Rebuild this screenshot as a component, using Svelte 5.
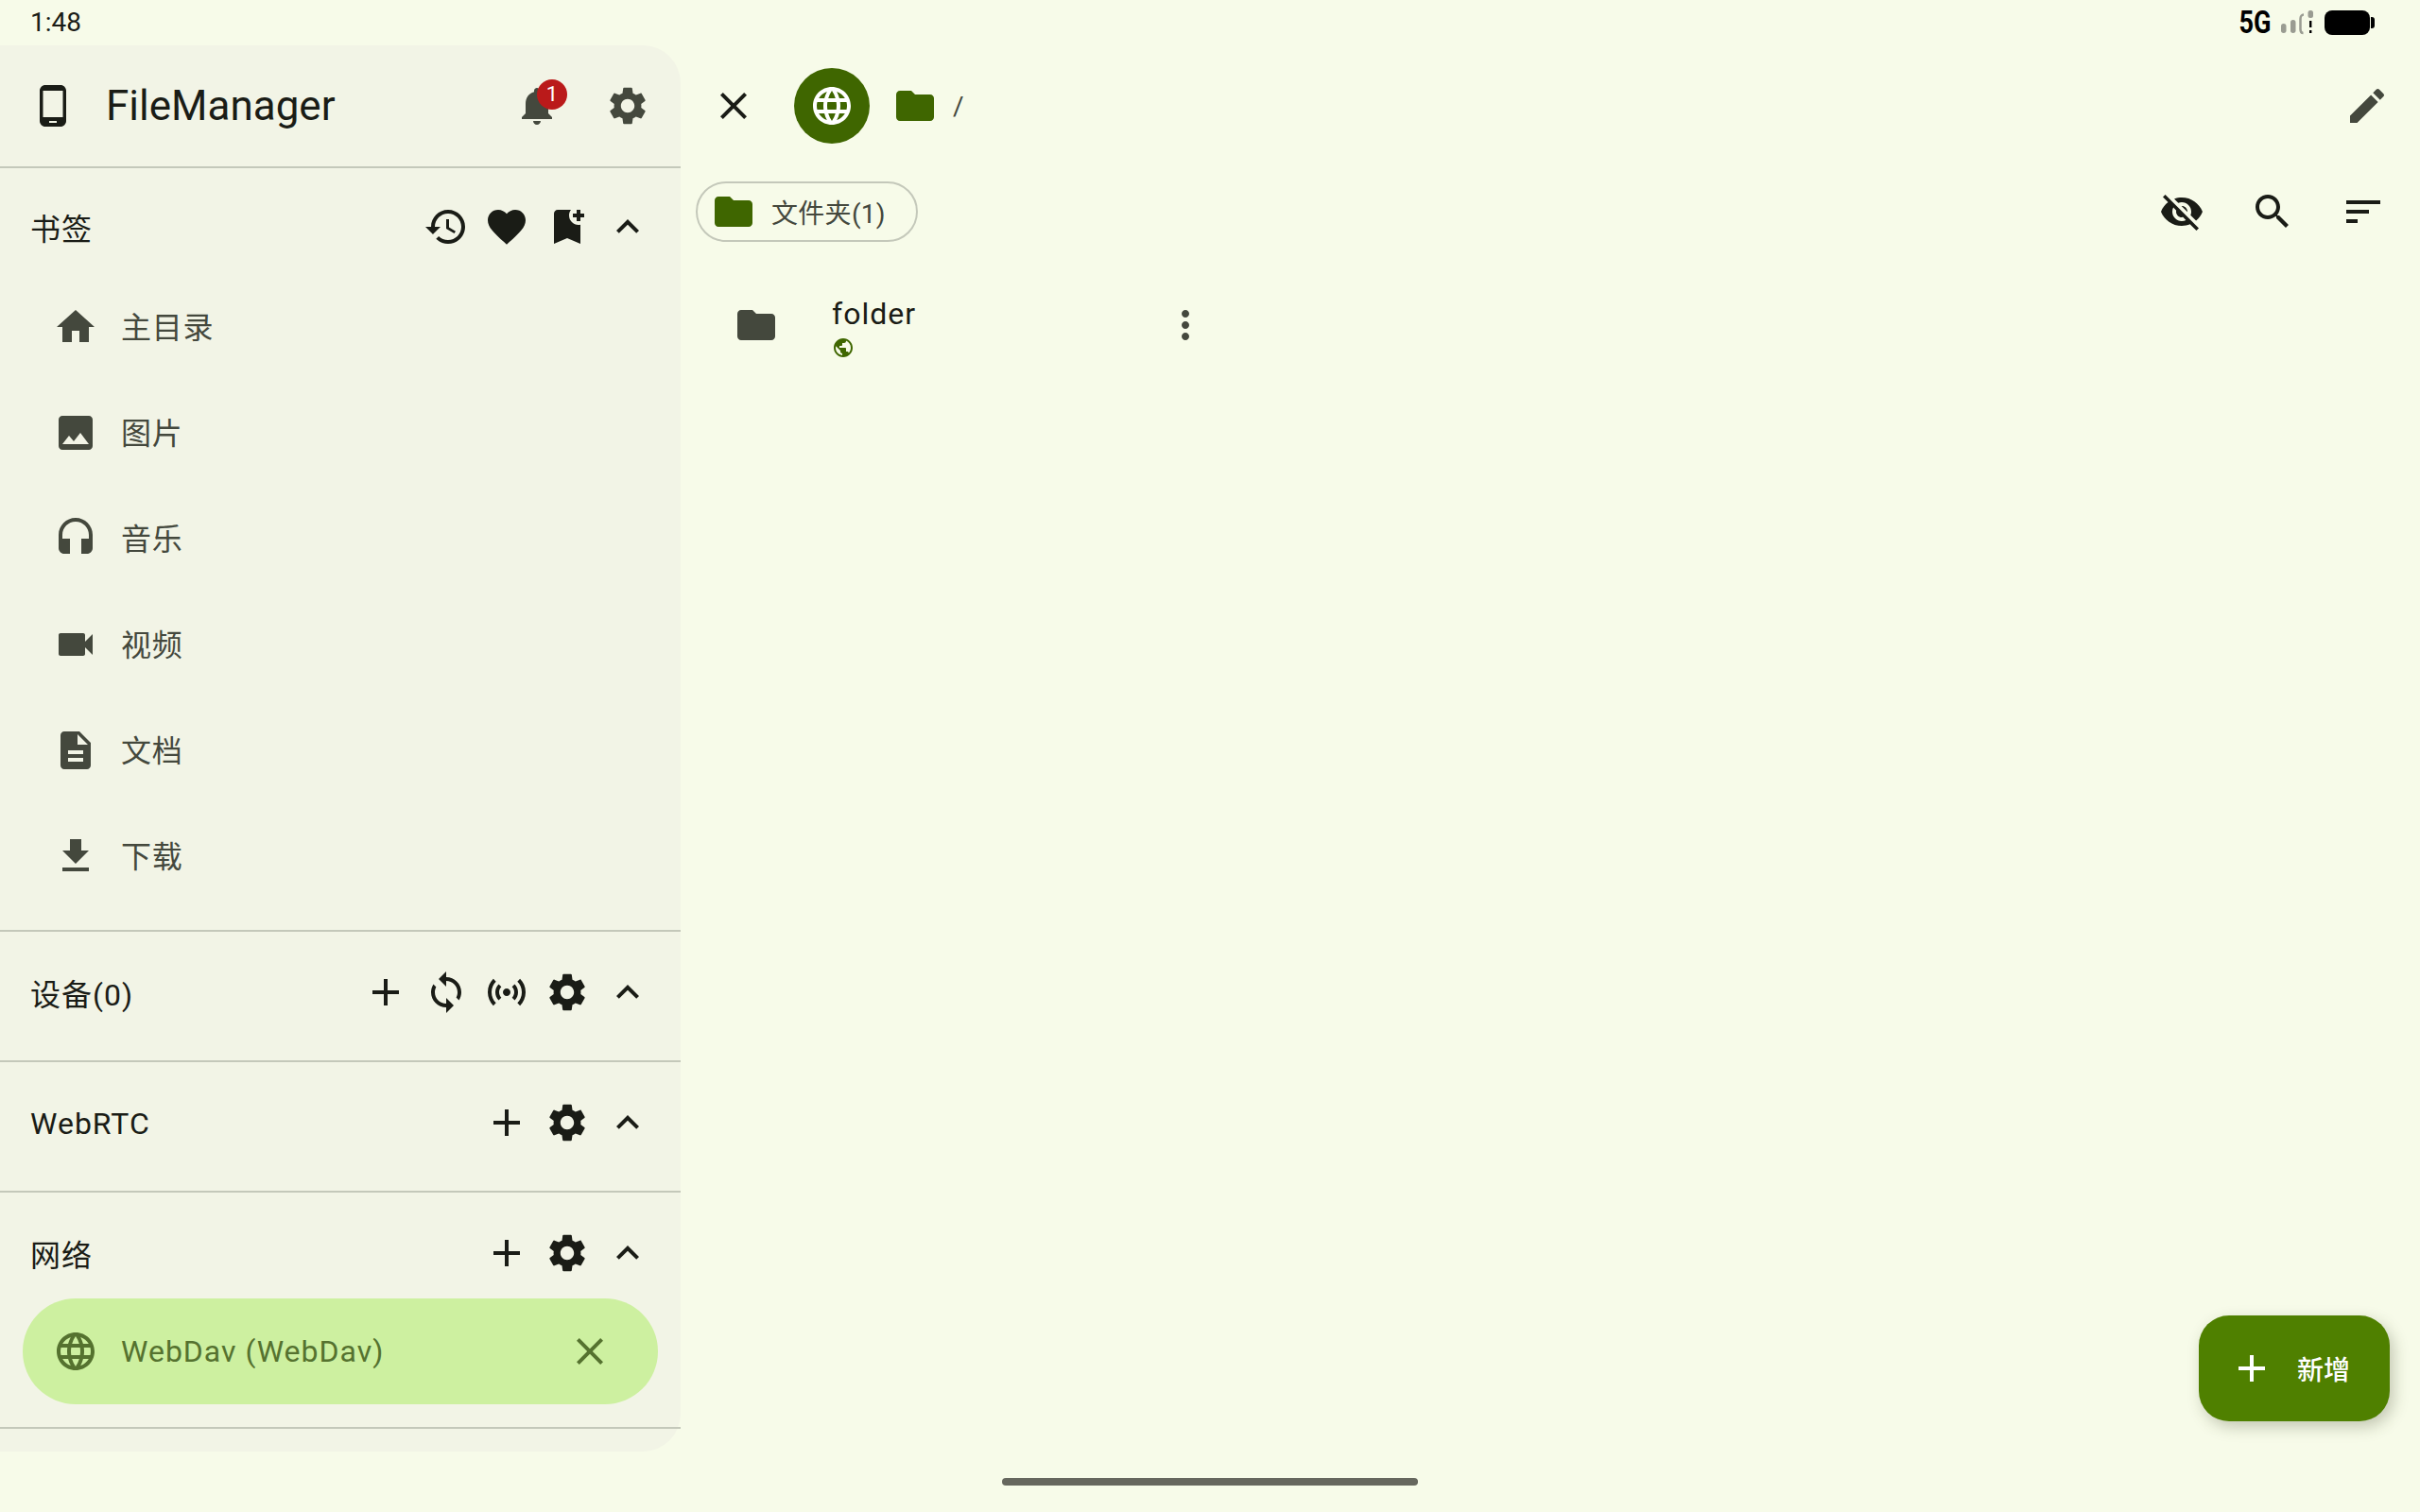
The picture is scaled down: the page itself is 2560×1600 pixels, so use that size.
<script>
  const icons = {
    phone: "M16 1H8C6.34 1 5 2.34 5 4v16c0 1.66 1.34 3 3 3h8c1.66 0 3-1.34 3-3V4c0-1.66-1.34-3-3-3zm-2 20h-4v-1h4v1zm3.25-3H6.75V4h10.5v14z",
    bell: "M12 22c1.1 0 2-.9 2-2h-4c0 1.1.89 2 2 2zm6-6v-5c0-3.07-1.64-5.64-4.5-6.32V4c0-.83-.67-1.5-1.5-1.5s-1.5.67-1.5 1.5v.68C7.63 5.36 6 7.92 6 11v5l-2 2v1h16v-1l-2-2z",
    settings: "M19.14 12.94c.04-.3.06-.61.06-.94 0-.32-.02-.64-.07-.94l2.03-1.58c.18-.14.23-.41.12-.61l-1.92-3.32c-.12-.22-.37-.29-.59-.22l-2.39.96c-.5-.38-1.03-.7-1.62-.94l-.36-2.54c-.04-.24-.24-.41-.48-.41h-3.84c-.24 0-.43.17-.47.41l-.36 2.54c-.59.24-1.13.57-1.62.94l-2.39-.96c-.22-.08-.47 0-.59.22L2.74 8.87c-.12.21-.08.47.12.61l2.03 1.58c-.05.3-.09.63-.09.94s.02.64.07.94l-2.03 1.58c-.18.14-.23.41-.12.61l1.92 3.32c.12.22.37.29.59.22l2.39-.96c.5.38 1.03.7 1.62.94l.36 2.54c.05.24.24.41.48.41h3.84c.24 0 .44-.17.47-.41l.36-2.54c.59-.24 1.13-.56 1.62-.94l2.39.96c.22.08.47 0 .59-.22l1.92-3.32c.12-.22.07-.47-.12-.61l-2.01-1.58zM12 15.6c-1.98 0-3.6-1.62-3.6-3.6s1.62-3.6 3.6-3.6 3.6 1.62 3.6 3.6-1.62 3.6-3.6 3.6z",
    history: "M13 3c-4.97 0-9 4.03-9 9H1l3.89 3.89.07.14L9 12H6c0-3.87 3.13-7 7-7s7 3.13 7 7-3.13 7-7 7c-1.93 0-3.68-.79-4.94-2.06l-1.42 1.42C8.27 19.99 10.51 21 13 21c4.97 0 9-4.03 9-9s-4.03-9-9-9zm-1 5v5l4.28 2.54.72-1.21-3.5-2.08V8H12z",
    heart: "M12 21.35l-1.45-1.32C5.4 15.36 2 12.28 2 8.5 2 5.42 4.42 3 7.5 3c1.74 0 3.41.81 4.5 2.09C13.09 3.81 14.76 3 16.5 3 19.58 3 22 5.42 22 8.5c0 3.78-3.4 6.86-8.55 11.54L12 21.35z",
    bookmarkAdd: "M21 7h-2v2h-2V7h-2V5h2V3h2v2h2v2zm-2 14l-7-3-7 3V5c0-1.1.9-2 2-2h7c-.63.84-1 1.87-1 3 0 2.76 2.24 5 5 5 .34 0 .68-.03 1-.1V21z",
    expand: "M12 8l-6 6 1.41 1.41L12 10.83l4.59 4.58L18 14z",
    home: "M10 20v-6h4v6h5v-8h3L12 3 2 12h3v8z",
    image: "M21 19V5c0-1.1-.9-2-2-2H5c-1.1 0-2 .9-2 2v14c0 1.1.9 2 2 2h14c1.1 0 2-.9 2-2zM8.5 13.5l2.5 3.01L14.5 12l4.5 6H5l3.5-4.5z",
    headset: "M12 1c-4.97 0-9 4.03-9 9v7c0 1.66 1.34 3 3 3h3v-8H5v-2c0-3.87 3.13-7 7-7s7 3.13 7 7v2h-4v8h3c1.66 0 3-1.34 3-3v-7c0-4.97-4.03-9-9-9z",
    video: "M17 10.5V7c0-.55-.45-1-1-1H4c-.55 0-1 .45-1 1v10c0 .55.45 1 1 1h12c.55 0 1-.45 1-1v-3.5l4 4v-11l-4 4z",
    doc: "M14 2H6c-1.1 0-1.99.9-1.99 2L4 20c0 1.1.89 2 1.99 2H18c1.1 0 2-.9 2-2V8l-6-6zm2 16H8v-2h8v2zm0-4H8v-2h8v2zm-3-5V3.5L18.5 9H13z",
    download: "M19 9h-4V3H9v6H5l7 7 7-7zM5 18v2h14v-2H5z",
    add: "M19 13h-6v6h-2v-6H5v-2h6V5h2v6h6v2z",
    sync: "M12 4V1L8 5l4 4V6c3.31 0 6 2.69 6 6 0 1.01-.25 1.97-.7 2.8l1.46 1.46C19.54 15.03 20 13.57 20 12c0-4.42-3.58-8-8-8zm0 14c-3.31 0-6-2.69-6-6 0-1.01.25-1.97.7-2.8L5.24 7.74C4.46 8.97 4 10.43 4 12c0 4.42 3.58 8 8 8v3l4-4-4-4v3z",
    sensors: "M7.76 16.24C6.67 15.16 6 13.66 6 12s.67-3.16 1.76-4.24l1.42 1.42C8.45 9.9 8 10.9 8 12c0 1.1.45 2.1 1.17 2.83l-1.41 1.41zm8.48 0C17.33 15.16 18 13.66 18 12s-.67-3.16-1.76-4.24l-1.42 1.42C15.55 9.9 16 10.9 16 12c0 1.1-.45 2.1-1.17 2.83l1.41 1.41zM12 10c-1.1 0-2 .9-2 2s.9 2 2 2 2-.9 2-2-.9-2-2-2zm8 2c0 2.21-.9 4.21-2.35 5.65l1.42 1.42C20.88 17.26 22 14.76 22 12s-1.12-5.26-2.93-7.07l-1.42 1.42C19.1 7.79 20 9.79 20 12zM6.35 6.35L4.93 4.93C3.12 6.74 2 9.24 2 12s1.12 5.26 2.93 7.07l1.42-1.42C4.9 16.21 4 14.21 4 12s.9-4.21 2.35-5.65z",
    language: "M11.99 2C6.47 2 2 6.48 2 12s4.47 10 9.99 10C17.52 22 22 17.52 22 12S17.52 2 11.99 2zm6.93 6h-2.95c-.32-1.25-.78-2.45-1.38-3.56 1.84.63 3.37 1.91 4.33 3.56zM12 4.04c.83 1.2 1.48 2.53 1.91 3.96h-3.82c.43-1.43 1.08-2.76 1.91-3.96zM4.26 14C4.1 13.36 4 12.69 4 12s.1-1.36.26-2h3.38c-.08.66-.14 1.32-.14 2 0 .68.06 1.34.14 2H4.26zm.82 2h2.95c.32 1.25.78 2.45 1.38 3.56-1.84-.63-3.37-1.9-4.33-3.56zm2.95-8H5.08c.96-1.66 2.49-2.93 4.33-3.56C8.81 5.55 8.35 6.75 8.03 8zM12 19.96c-.83-1.2-1.48-2.53-1.91-3.96h3.82c-.43 1.43-1.08 2.76-1.91 3.96zM14.34 14H9.66c-.09-.66-.16-1.32-.16-2 0-.68.07-1.35.16-2h4.68c.09.65.16 1.32.16 2 0 .68-.07 1.34-.16 2zm.25 5.56c.6-1.11 1.06-2.31 1.38-3.56h2.95c-.96 1.65-2.49 2.93-4.33 3.56zM16.36 14c.08-.66.14-1.32.14-2 0-.68-.06-1.34-.14-2h3.38c.16.64.26 1.31.26 2s-.1 1.36-.26 2h-3.38z",
    close: "M19 6.41L17.59 5 12 10.59 6.41 5 5 6.41 10.59 12 5 17.59 6.41 19 12 13.41 17.59 19 19 17.59 13.41 12z",
    folder: "M10 4H4c-1.1 0-1.99.9-1.99 2L2 18c0 1.1.9 2 2 2h16c1.1 0 2-.9 2-2V8c0-1.1-.9-2-2-2h-8l-2-2z",
    publicIcon: "M12 2C6.48 2 2 6.48 2 12s4.48 10 10 10 10-4.48 10-10S17.52 2 12 2zm-1 17.93c-3.95-.49-7-3.85-7-7.93 0-.62.08-1.21.21-1.79L9 15v1c0 1.1.9 2 2 2v1.93zm6.9-2.54c-.26-.81-1-1.39-1.9-1.39h-1v-3c0-.55-.45-1-1-1H8v-2h2c.55 0 1-.45 1-1V7h2c1.1 0 2-.9 2-2v-.41c2.93 1.19 5 4.06 5 7.41 0 2.08-.8 3.97-2.1 5.39z",
    more: "M12 8c1.1 0 2-.9 2-2s-.9-2-2-2-2 .9-2 2 .9 2 2 2zm0 2c-1.1 0-2 .9-2 2s.9 2 2 2 2-.9 2-2-.9-2-2-2zm0 6c-1.1 0-2 .9-2 2s.9 2 2 2 2-.9 2-2-.9-2-2-2z",
    edit: "M3 17.25V21h3.75L17.81 9.94l-3.75-3.75L3 17.25zM20.71 7.04c.39-.39.39-1.02 0-1.41l-2.34-2.34c-.39-.39-1.02-.39-1.41 0l-1.83 1.83 3.75 3.75 1.83-1.83z",
    eyeOff: "M12 7c2.76 0 5 2.24 5 5 0 .65-.13 1.26-.36 1.83l2.92 2.92c1.51-1.26 2.7-2.89 3.43-4.75-1.73-4.39-6-7.5-11-7.5-1.4 0-2.74.25-3.98.7l2.16 2.16C10.74 7.13 11.35 7 12 7zM2 4.27l2.28 2.28.46.46C3.08 8.3 1.78 10.02 1 12c1.73 4.39 6 7.5 11 7.5 1.55 0 3.03-.3 4.38-.84l.42.42L19.73 22 21 20.73 3.27 3 2 4.27zM7.53 9.8l1.55 1.55c-.05.21-.08.43-.08.65 0 1.66 1.34 3 3 3 .22 0 .44-.03.65-.08l1.55 1.55c-.67.33-1.41.53-2.2.53-2.76 0-5-2.24-5-5 0-.79.2-1.53.53-2.2zm4.31-.78l3.15 3.15.02-.16c0-1.66-1.34-3-3-3l-.17.01z",
    search: "M15.5 14h-.79l-.28-.27C15.41 12.59 16 11.11 16 9.5 16 5.91 13.09 3 9.5 3S3 5.91 3 9.5 5.91 16 9.5 16c1.61 0 3.09-.59 4.23-1.57l.27.28v.79l5 4.99L20.49 19l-4.99-5zm-6 0C7.01 14 5 11.99 5 9.5S7.01 5 9.5 5 14 7.01 14 9.5 11.99 14 9.5 14z",
    sort: "M3 18h6v-2H3v2zM3 6v2h18V6H3zm0 7h12v-2H3v2z"
  };

  const bookmarks = [
    { icon: "home", label: "主目录" },
    { icon: "image", label: "图片" },
    { icon: "headset", label: "音乐" },
    { icon: "video", label: "视频" },
    { icon: "doc", label: "文档" },
    { icon: "download", label: "下载" }
  ];

  const isLatin = (s) => /^[A-Za-z]/.test(s);
</script>

{#snippet icon(name, cls = "")}
  <svg class="icon {cls}" viewBox="0 0 24 24" aria-hidden="true"><path d={icons[name]} /></svg>
{/snippet}

{#snippet sectionHead(title, actions)}
  <div class="section-head">
    <span class="section-title" class:latin={isLatin(title)}>{title}</span>
    <div class="section-actions">
      {#each actions as a}
        {@render icon(a)}
      {/each}
      {@render icon("expand")}
    </div>
  </div>
{/snippet}

<div class="screen">
  <div class="status-bar">
    <span class="time">1:48</span>
    <div class="status-right">
      <span class="net">5G</span>
      <svg class="signal" width="34" height="26" viewBox="0 0 34 26" aria-hidden="true">
        <rect x="0" y="14" width="5.500" height="10" rx="2.700" fill="#9a9c92" />
        <rect x="10" y="10" width="5.500" height="14" rx="2.700" fill="#9a9c92" />
        <path d="M24 4.500c-2 0-3.500 2-3.500 4.500v11c0 2 1 4 3 4" fill="none" stroke="#9a9c92" stroke-width="2.500" />
        <rect x="28.500" y="0" width="5.500" height="8" rx="2.500" fill="#9a9c92" />
        <rect x="30" y="11" width="2.400" height="7" fill="#000" />
        <rect x="30" y="21" width="2.400" height="3" fill="#000" />
      </svg>
      <div class="battery"><span class="battery-body"></span><span class="battery-cap"></span></div>
    </div>
  </div>

  <div class="content">
    <aside class="sidebar">
      <header class="side-top">
        {@render icon("phone", "dark")}
        <span class="app-title">FileManager</span>
        <div class="bell">
          {@render icon("bell")}
          <span class="badge">1</span>
        </div>
        {@render icon("settings")}
      </header>

      <section class="section bookmarks">
        {@render sectionHead("书签", ["history", "heart", "bookmarkAdd"])}
        <ul class="nav">
          {#each bookmarks as b}
            <li class="nav-item">
              {@render icon(b.icon)}
              <span>{b.label}</span>
            </li>
          {/each}
        </ul>
      </section>

      <section class="section devices">
        {@render sectionHead("设备(0)", ["add", "sync", "sensors", "settings"])}
      </section>

      <section class="section devices">
        {@render sectionHead("WebRTC", ["add", "settings"])}
      </section>

      <section class="section network">
        {@render sectionHead("网络", ["add", "settings"])}
        <div class="pill">
          {@render icon("language")}
          <span class="pill-label">WebDav (WebDav)</span>
          {@render icon("close")}
        </div>
      </section>
    </aside>

    <main class="main">
      <div class="toolbar">
        {@render icon("close", "dark")}
        <div class="avatar">{@render icon("language")}</div>
        <div class="crumb">
          {@render icon("folder", "green")}
          <span class="slash">/</span>
        </div>
        <div class="edit">{@render icon("edit")}</div>
      </div>

      <div class="filters">
        <div class="chip">
          {@render icon("folder", "green")}
          <span>文件夹(1)</span>
        </div>
        <div class="filter-actions">
          {@render icon("eyeOff", "dark")}
          {@render icon("search", "dark")}
          {@render icon("sort", "dark")}
        </div>
      </div>

      <div class="file-row">
        {@render icon("folder")}
        <div class="file-info">
          <span class="file-name">folder</span>
          <svg class="mini" viewBox="0 0 24 24" aria-hidden="true"><path d={icons.publicIcon} /></svg>
        </div>
        {@render icon("more")}
      </div>
    </main>
  </div>

  <button class="fab">
    {@render icon("add")}
    <span>新增</span>
  </button>

  <div class="gesture"></div>
</div>

<style>
  :global(body) { margin: 0; }

  .screen {
    position: relative;
    width: 2560px;
    height: 1600px;
    overflow: hidden;
    background: #f7fbe9;
    color: #1a1c16;
    font-family: Roboto, "Noto Sans CJK SC", sans-serif;
  }

  .icon { display: block; width: 48px; height: 48px; flex: none; fill: currentColor; }
  .dark { color: #1a1c16; }
  .green { color: #3f6600; }

  .status-bar { display: flex; align-items: center; justify-content: space-between; height: 48px; padding: 0 48px 0 32px; }
  .time { font-size: 28px; line-height: 46px; }
  .status-right { display: flex; align-items: center; }
  .net { display: inline-block; font-weight: 700; font-size: 33px; line-height: 48px; color: #000; margin-right: 11px; transform: scaleX(0.82); transform-origin: right center; }
  .signal { margin-right: 12px; }
  .battery { display: flex; align-items: center; }
  .battery-body { width: 48px; height: 26px; border-radius: 8px; background: #000; }
  .battery-cap { width: 4px; height: 12px; margin-left: 1px; border-radius: 0 3px 3px 0; background: #000; }

  .content { display: flex; }

  .sidebar {
    width: 720px;
    height: 1488px;
    flex: none;
    box-sizing: border-box;
    background: #f2f4e6;
    border-radius: 0 40px 40px 0;
  }

  .side-top { display: flex; align-items: center; height: 128px; padding: 0 32px; border-bottom: 2px solid #c4c8ba; color: #44483d; margin-bottom: -1px; }
  .app-title { flex: 1; margin-left: 32px; font-size: 44px; color: #1a1c16; }
  .bell { position: relative; margin-right: 48px; }
  .badge {
    position: absolute;
    top: -4px;
    right: -8px;
    width: 32px;
    height: 32px;
    border-radius: 50%;
    background: #ba1a1a;
    color: #fff;
    font-size: 22px;
    line-height: 32px;
    text-align: center;
  }

  .section { box-sizing: border-box; border-bottom: 2px solid #c4c8ba; }
  .bookmarks { height: 809px; padding-top: 39px; }
  .devices { height: 138px; padding-top: 40px; }
  .network { height: 250px; padding-top: 40px; }

  .section-head { display: flex; align-items: center; justify-content: space-between; height: 48px; padding: 0 32px; }
  .section-title { font-size: 32px; line-height: 48px; padding-top: 6px; letter-spacing: 1px; }
  .section-title.latin { padding-top: 1px; }
  .section-actions { display: flex; gap: 16px; }

  .nav { list-style: none; margin: 26px 0 0; padding: 0; color: #44483d; }
  .nav-item { display: flex; align-items: center; gap: 25px; height: 112px; padding-left: 56px; font-size: 32px; letter-spacing: 0.8px; }
  .nav-item span { margin-left: -1px; margin-bottom: 5px; }

  .pill {
    display: flex;
    align-items: center;
    height: 112px;
    margin: 24px 24px 0;
    padding: 0 48px 0 32px;
    border-radius: 56px;
    background: #cdf0a0;
    color: #55722f;
  }
  .pill-label { flex: 1; margin-left: 24px; font-size: 32px; letter-spacing: 1px; }

  .main { flex: 1; min-width: 0; }

  .toolbar { display: flex; align-items: center; height: 128px; padding: 0 32px; margin-bottom: 16px; }
  .avatar { display: flex; align-items: center; justify-content: center; width: 80px; height: 80px; margin-left: 40px; border-radius: 50%; background: #3f6600; color: #fff; }
  .crumb { display: flex; align-items: center; gap: 16px; margin-left: 24px; flex: 1; }
  .slash { font-size: 28px; color: #44483d; }
  .edit { color: #44483d; }

  .filters { display: flex; align-items: center; justify-content: space-between; height: 64px; padding: 0 36px 0 16px; }
  .chip {
    display: flex;
    align-items: center;
    gap: 16px;
    width: 235px;
    height: 64px;
    box-sizing: border-box;
    padding-left: 14px;
    border: 2px solid #c4c8ba;
    border-radius: 32px;
    font-size: 28px;
    letter-spacing: 0.3px;
    color: #44483d;
  }
  .filter-actions { display: flex; gap: 48px; }

  .file-row { display: flex; align-items: center; width: 502px; height: 96px; margin: 40px 0 0 32px; color: #44483d; padding-left: 24px; }
  .file-info { flex: 1; display: flex; flex-direction: column; margin: 3px 0 0 56px; }
  .file-name { font-size: 32px; line-height: 40px; letter-spacing: 1px; color: #1a1c16; }
  .mini { width: 24px; height: 24px; fill: #3f6600; display: block; margin-top: 4px; }

  .fab {
    position: absolute;
    top: 1392px;
    left: 2326px;
    display: flex;
    align-items: center;
    gap: 24px;
    width: 202px;
    height: 112px;
    padding: 0 0 0 32px;
    box-sizing: border-box;
    border: 0;
    border-radius: 32px;
    background: #4f8000;
    color: #fff;
    font-family: inherit;
    font-size: 28px;
    font-weight: 500;
    box-shadow: 4px 6px 16px rgba(60, 70, 40, 0.28);
  }

  .gesture { position: absolute; left: 1060px; top: 1564px; width: 440px; height: 8px; border-radius: 4px; background: #66675e; }
</style>
